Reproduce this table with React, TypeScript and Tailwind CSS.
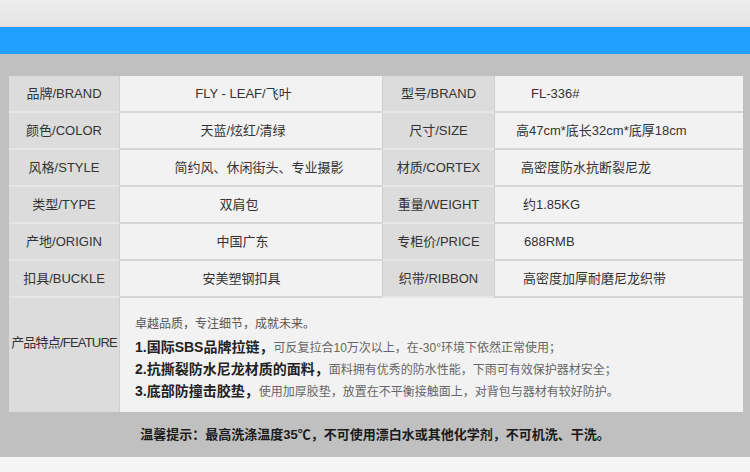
const specs = [
  { l1: '品牌/BRAND', v1: 'FLY - LEAF/飞叶', v1pad: 'pr-[15px]', l2: '型号/BRAND', v2: 'FL-336#', pad: 'pl-[36px]' },
  { l1: '颜色/COLOR', v1: '天蓝/炫红/清绿', v1pad: 'pr-[16px]', l2: '尺寸/SIZE', v2: '高47cm*底长32cm*底厚18cm', pad: 'pl-[21px]' },
  { l1: '风格/STYLE', v1: '简约风、休闲街头、专业摄影', v1pad: 'pl-[16px]', l2: '材质/CORTEX', v2: '高密度防水抗断裂尼龙', pad: 'pl-[26px]' },
  { l1: '类型/TYPE', v1: '双肩包', v1pad: 'pr-[24px]', l2: '重量/WEIGHT', v2: '约1.85KG', pad: 'pl-[28px]' },
  { l1: '产地/ORIGIN', v1: '中国广东', v1pad: 'pr-[17px]', l2: '专柜价/PRICE', v2: '688RMB', pad: 'pl-[29px]' },
  { l1: '扣具/BUCKLE', v1: '安美塑钢扣具', v1pad: 'pr-[19px]', l2: '织带/RIBBON', v2: '高密度加厚耐磨尼龙织带', pad: 'pl-[28px]' },
];

const features = [
  { bold: '1.国际SBS品牌拉链，', text: '可反复拉合10万次以上，在-30°环境下依然正常使用；' },
  { bold: '2.抗撕裂防水尼龙材质的面料，', text: '面料拥有优秀的防水性能，下雨可有效保护器材安全；' },
  { bold: '3.底部防撞击胶垫，', text: '使用加厚胶垫，放置在不平衡接触面上，对背包与器材有较好防护。' },
];

const font = "font-['Liberation_Sans','Noto_Sans_CJK_SC',sans-serif]";

export default function App() {
  return (
    <div className={`h-[472px] w-[750px] overflow-hidden bg-[#f5f5f5] ${font}`}>
      <div className="h-[27px] border-b border-[#ecd6d6] bg-gradient-to-b from-[#ededed] to-[#e4e4e4]" />
      <div className="h-[27px] bg-[#1f9fff]" />

      <div className="bg-[#c1c0c0] pl-[9px] pr-[7px] pt-[22px]">
        <div className="grid grid-cols-[110px_263px_112px_249px] text-[13px] text-[#333]">
          {specs.map((row) => (
            <div key={row.l1} className="contents">
              <div className="flex h-[37px] items-center justify-center border-b-2 border-[#e6e6e6] bg-[#dcdcdc]">
                {row.l1}
              </div>
              <div
                className={`flex h-[37px] items-center justify-center border-b-2 border-l border-[#d6d6d6] border-l-[#cfcfcf] bg-[#f2f2f2] ${row.v1pad}`}
              >
                {row.v1}
              </div>
              <div className="flex h-[37px] items-center justify-center border-b-2 border-l border-[#e6e6e6] border-l-[#cfcfcf] bg-[#dcdcdc]">
                {row.l2}
              </div>
              <div
                className={`flex h-[37px] items-center border-b-2 border-l border-[#d6d6d6] border-l-[#cfcfcf] bg-[#f2f2f2] ${row.pad}`}
              >
                {row.v2}
              </div>
            </div>
          ))}

          <div className="flex h-[114px] justify-center bg-[#dcdcdc] pt-[35px] tracking-[-0.8px] whitespace-nowrap">
            产品特点/FEATURE
          </div>
          <div className="col-span-3 h-[114px] border-l border-[#cfcfcf] bg-[#f2f2f2] pl-[15px] pt-[16px]">
            <div className="text-[12px] leading-[20px] text-[#555]">卓越品质，专注细节，成就未来。</div>
            <div className="mt-[3px] flex flex-col">
              {features.map((f) => (
                <div key={f.bold} className="whitespace-nowrap leading-[21px]">
                  <span className="text-[14px] font-bold text-[#222]">{f.bold}</span>
                  <span className="text-[12px] text-[#666]">{f.text}</span>
                </div>
              ))}
            </div>
          </div>
        </div>

        <div className="flex h-[45px] items-center justify-center pr-[2px] text-[13px] font-bold text-[#1a1a1a]">
          温馨提示：最高洗涤温度35℃，不可使用漂白水或其他化学剂，不可机洗、干洗。
        </div>
      </div>
    </div>
  );
}
